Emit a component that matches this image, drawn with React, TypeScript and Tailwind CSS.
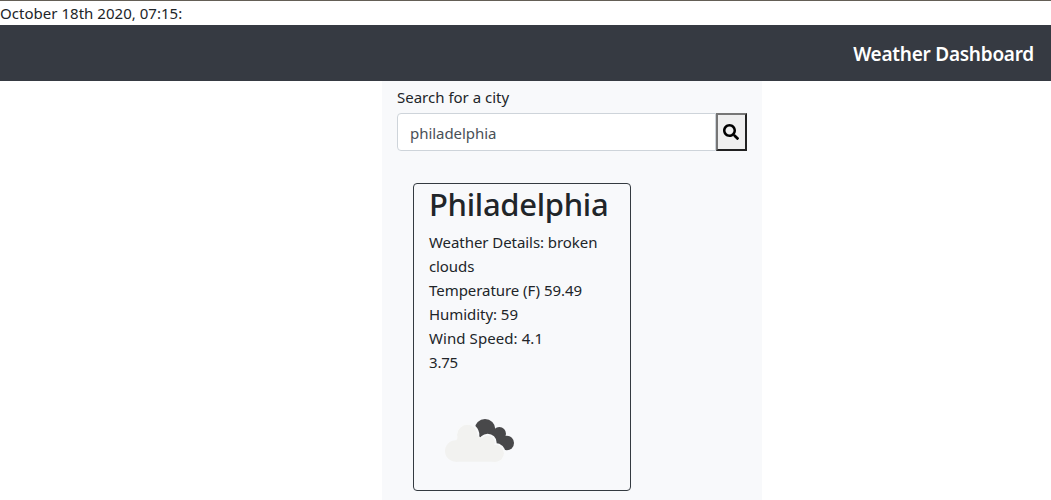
import React from "react";

const details = [
  { text: "Weather Details: broken", style: "tracking-[-0.06px]" },
  { text: "clouds", style: "tracking-[-0.1px]" },
  { text: "Temperature (F) 59.49", style: "tracking-[-0.05px]" },
  { text: "Humidity: 59", style: "tracking-[-0.05px]" },
  { text: "Wind Speed: 4.1", style: "tracking-[0.08px]" },
  { text: "3.75", style: "tracking-[-0.2px]" },
];

function SearchIcon() {
  return (
    <svg viewBox="0 0 512 512" className="h-4 w-4" fill="black">
      <path d="M505 442.7L405.3 343c-4.500-4.500-10.600-7-17-7H372c27.600-35.300 44-79.700 44-128C416 93.100 322.900 0 208 0S0 93.100 0 208s93.100 208 208 208c48.300 0 92.700-16.400 128-44v16.300c0 6.400 2.500 12.500 7 17l99.700 99.700c9.400 9.400 24.600 9.400 33.900 0l28.300-28.300c9.400-9.400 9.400-24.600.1-34zM208 336c-70.700 0-128-57.200-128-128 0-70.700 57.200-128 128-128 70.700 0 128 57.200 128 128 0 70.700-57.200 128-128 128z" />
    </svg>
  );
}

function BrokenClouds() {
  return (
    <svg viewBox="0 0 300 210" className="h-[70px] w-[100px]">
      <g fill="#48484a">
        <circle cx="165" cy="73" r="31" />
        <circle cx="208" cy="86" r="20" />
        <circle cx="230" cy="114" r="22" />
        <path d="M150 75h55l25 30v30h-20l-50-30z" />
      </g>
      <g fill="#f2f2f0" stroke="#f8f9fa" strokeWidth="6">
        <circle cx="112" cy="90" r="33" />
        <circle cx="173" cy="113" r="24" />
        <circle cx="196" cy="145" r="28" />
      </g>
      <g fill="#f2f2f0">
        <circle cx="77" cy="138" r="32" />
        <circle cx="112" cy="90" r="30" />
        <circle cx="173" cy="113" r="21" />
        <circle cx="196" cy="145" r="25" />
        <path d="M77 110l10-20h52l40 20 17 30v30H77z" />
      </g>
    </svg>
  );
}

export default function App() {
  return (
    <div className="flex h-[500px] w-[1051px] flex-col overflow-hidden border-t border-[#645f56] bg-white font-['Noto_Sans',sans-serif] text-[15px] leading-6 text-[#212529]">
      <p className="h-6 shrink-0 tracking-[0.03px]">
        <span>October 18th 2020, 07:15:</span>
      </p>
      <nav className="flex h-14 shrink-0 items-center justify-end bg-[#363a42] pt-0.5 pr-[17px]">
        <span className="text-[19px] font-semibold tracking-[-0.25px] text-white">Weather Dashboard</span>
      </nav>
      <main className="ml-[382px] w-[380px] grow bg-[#f8f9fb] px-[15px] pt-1">
        <label className="block h-7" htmlFor="city">
          <span>Search for a city</span>
        </label>
        <div className="flex h-[38px]">
          <input
            id="city"
            defaultValue="philadelphia"
            className="h-[38px] w-[319px] rounded-l border border-[#ced4da] bg-white px-3 pt-0.5 tracking-[-0.05px] text-[#495057] outline-none"
          />
          <button
            aria-label="Search"
            className="flex h-[38px] w-[31px] items-center justify-center border-2 border-t-[#767676] border-r-[#212121] border-b-[#212121] border-l-[#767676] bg-[#efefef] pr-[2px]"
          >
            <SearchIcon />
          </button>
        </div>
        <section className="mt-8 ml-4 h-[308px] w-[218px] rounded border border-[#343a40] px-[15px]">
          <h2 className="mb-2 flex h-[38px] items-center pt-0.5 text-[31px] font-medium whitespace-nowrap">
            <span className="tracking-[-0.3px]">Philadelphia</span>
          </h2>
          {details.map((line) => (
            <p key={line.text} className={line.style}>
              <span>{line.text}</span>
            </p>
          ))}
          <div className="mt-[31px] ml-px">
            <BrokenClouds />
          </div>
        </section>
      </main>
    </div>
  );
}
